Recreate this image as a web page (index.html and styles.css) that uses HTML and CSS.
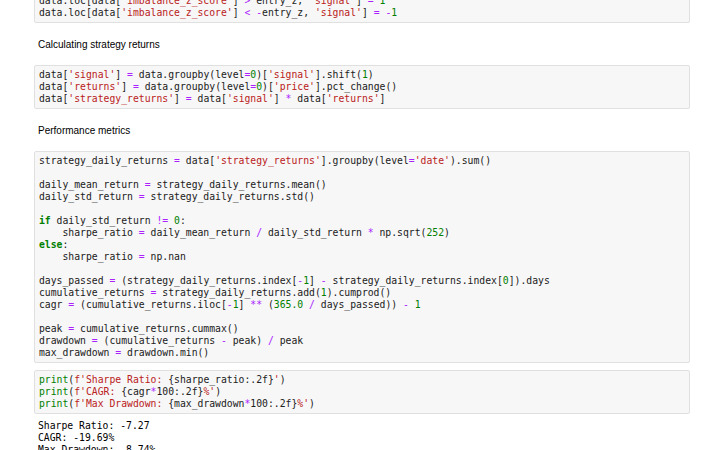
FILE: index.html
```html
<!DOCTYPE html>
<html lang="en">
<head>
    <meta charset="UTF-8">
    <meta name="viewport" content="width=device-width, initial-scale=1.0">
    <title>Notebook</title>
    <link rel="stylesheet" href="styles.css">
</head>
<body>
    <div class="notebook">
        <!-- cell cut off at the top of the view -->
        <pre class="cell first">data.loc[data[<span class="s">'imbalance_z_score'</span>] <span class="o">&gt;</span> entry_z, <span class="s">'signal'</span>] <span class="o">=</span> <span class="n">1</span>
data.loc[data[<span class="s">'imbalance_z_score'</span>] <span class="o">&lt;</span> <span class="o">-</span>entry_z, <span class="s">'signal'</span>] <span class="o">=</span> <span class="o">-</span><span class="n">1</span></pre>

        <div class="markdown top">Calculating strategy returns</div>

        <pre class="cell">data[<span class="s">'signal'</span>] <span class="o">=</span> data.groupby(level<span class="o">=</span><span class="n">0</span>)[<span class="s">'signal'</span>].shift(<span class="n">1</span>)
data[<span class="s">'returns'</span>] <span class="o">=</span> data.groupby(level<span class="o">=</span><span class="n">0</span>)[<span class="s">'price'</span>].pct_change()
data[<span class="s">'strategy_returns'</span>] <span class="o">=</span> data[<span class="s">'signal'</span>] <span class="o">*</span> data[<span class="s">'returns'</span>]</pre>

        <div class="markdown">Performance metrics</div>

        <pre class="cell">strategy_daily_returns <span class="o">=</span> data[<span class="s">'strategy_returns'</span>].groupby(level<span class="o">=</span><span class="s">'date'</span>).sum()

daily_mean_return <span class="o">=</span> strategy_daily_returns.mean()
daily_std_return <span class="o">=</span> strategy_daily_returns.std()

<span class="k">if</span> daily_std_return <span class="o">!=</span> <span class="n">0</span>:
    sharpe_ratio <span class="o">=</span> daily_mean_return <span class="o">/</span> daily_std_return <span class="o">*</span> np.sqrt(<span class="n">252</span>)
<span class="k">else</span>:
    sharpe_ratio <span class="o">=</span> np.nan

days_passed <span class="o">=</span> (strategy_daily_returns.index[<span class="o">-</span><span class="n">1</span>] <span class="o">-</span> strategy_daily_returns.index[<span class="n">0</span>]).days
cumulative_returns <span class="o">=</span> strategy_daily_returns.add(<span class="n">1</span>).cumprod()
cagr <span class="o">=</span> (cumulative_returns.iloc[<span class="o">-</span><span class="n">1</span>] <span class="o">**</span> (<span class="n">365.0</span> <span class="o">/</span> days_passed)) <span class="o">-</span> <span class="n">1</span>

peak <span class="o">=</span> cumulative_returns.cummax()
drawdown <span class="o">=</span> (cumulative_returns <span class="o">-</span> peak) <span class="o">/</span> peak
max_drawdown <span class="o">=</span> drawdown.min()</pre>

        <pre class="cell tight"><span class="b">print</span>(<span class="s">f'Sharpe Ratio: </span>{sharpe_ratio:.2f}<span class="s">'</span>)
<span class="b">print</span>(<span class="s">f'CAGR: </span>{cagr<span class="o">*</span>100:.2f}<span class="s">%'</span>)
<span class="b">print</span>(<span class="s">f'Max Drawdown: </span>{max_drawdown<span class="o">*</span>100:.2f}<span class="s">%'</span>)</pre>
        <pre class="output">Sharpe Ratio: -7.27
CAGR: -19.69%
Max Drawdown: -8.74%</pre>
    </div>
</body>
</html>
```

FILE: styles.css
```css
body {
    margin: 0;
    background: #fff;
    overflow: hidden;
}
.notebook {
    width: 656px;
    margin-left: 34px;
}
.cell {
    margin: 0;
    padding: 3px 4px;
    background-color: #f7f7f7;
    border: 1px solid #e0e0e0;
    border-radius: 2px;
    font-family: "DejaVu Sans Mono", monospace;
    font-size: 9.75px;
    line-height: 12px;
    color: #212121;
    white-space: pre;
    overflow: hidden;
}
.cell.first {
    margin-top: -9px;
}
.cell.tight {
    margin-top: 7px;
}
.markdown {
    padding: 15px 4px 14px;
    font-family: "Liberation Sans", Arial, sans-serif;
    font-size: 10px;
    line-height: 13px;
    color: #000;
}
.markdown.top {
    padding-top: 15px;
}
.output {
    margin: 0;
    padding: 6px 4px;
    font-family: "DejaVu Sans Mono", monospace;
    font-size: 9.75px;
    line-height: 12px;
    color: #000;
}
.s { color: #ba2121; }
.o { color: #aa22ff; }
.n { color: #008000; }
.b { color: #008000; }
.k { color: #008000; font-weight: bold; }
```
